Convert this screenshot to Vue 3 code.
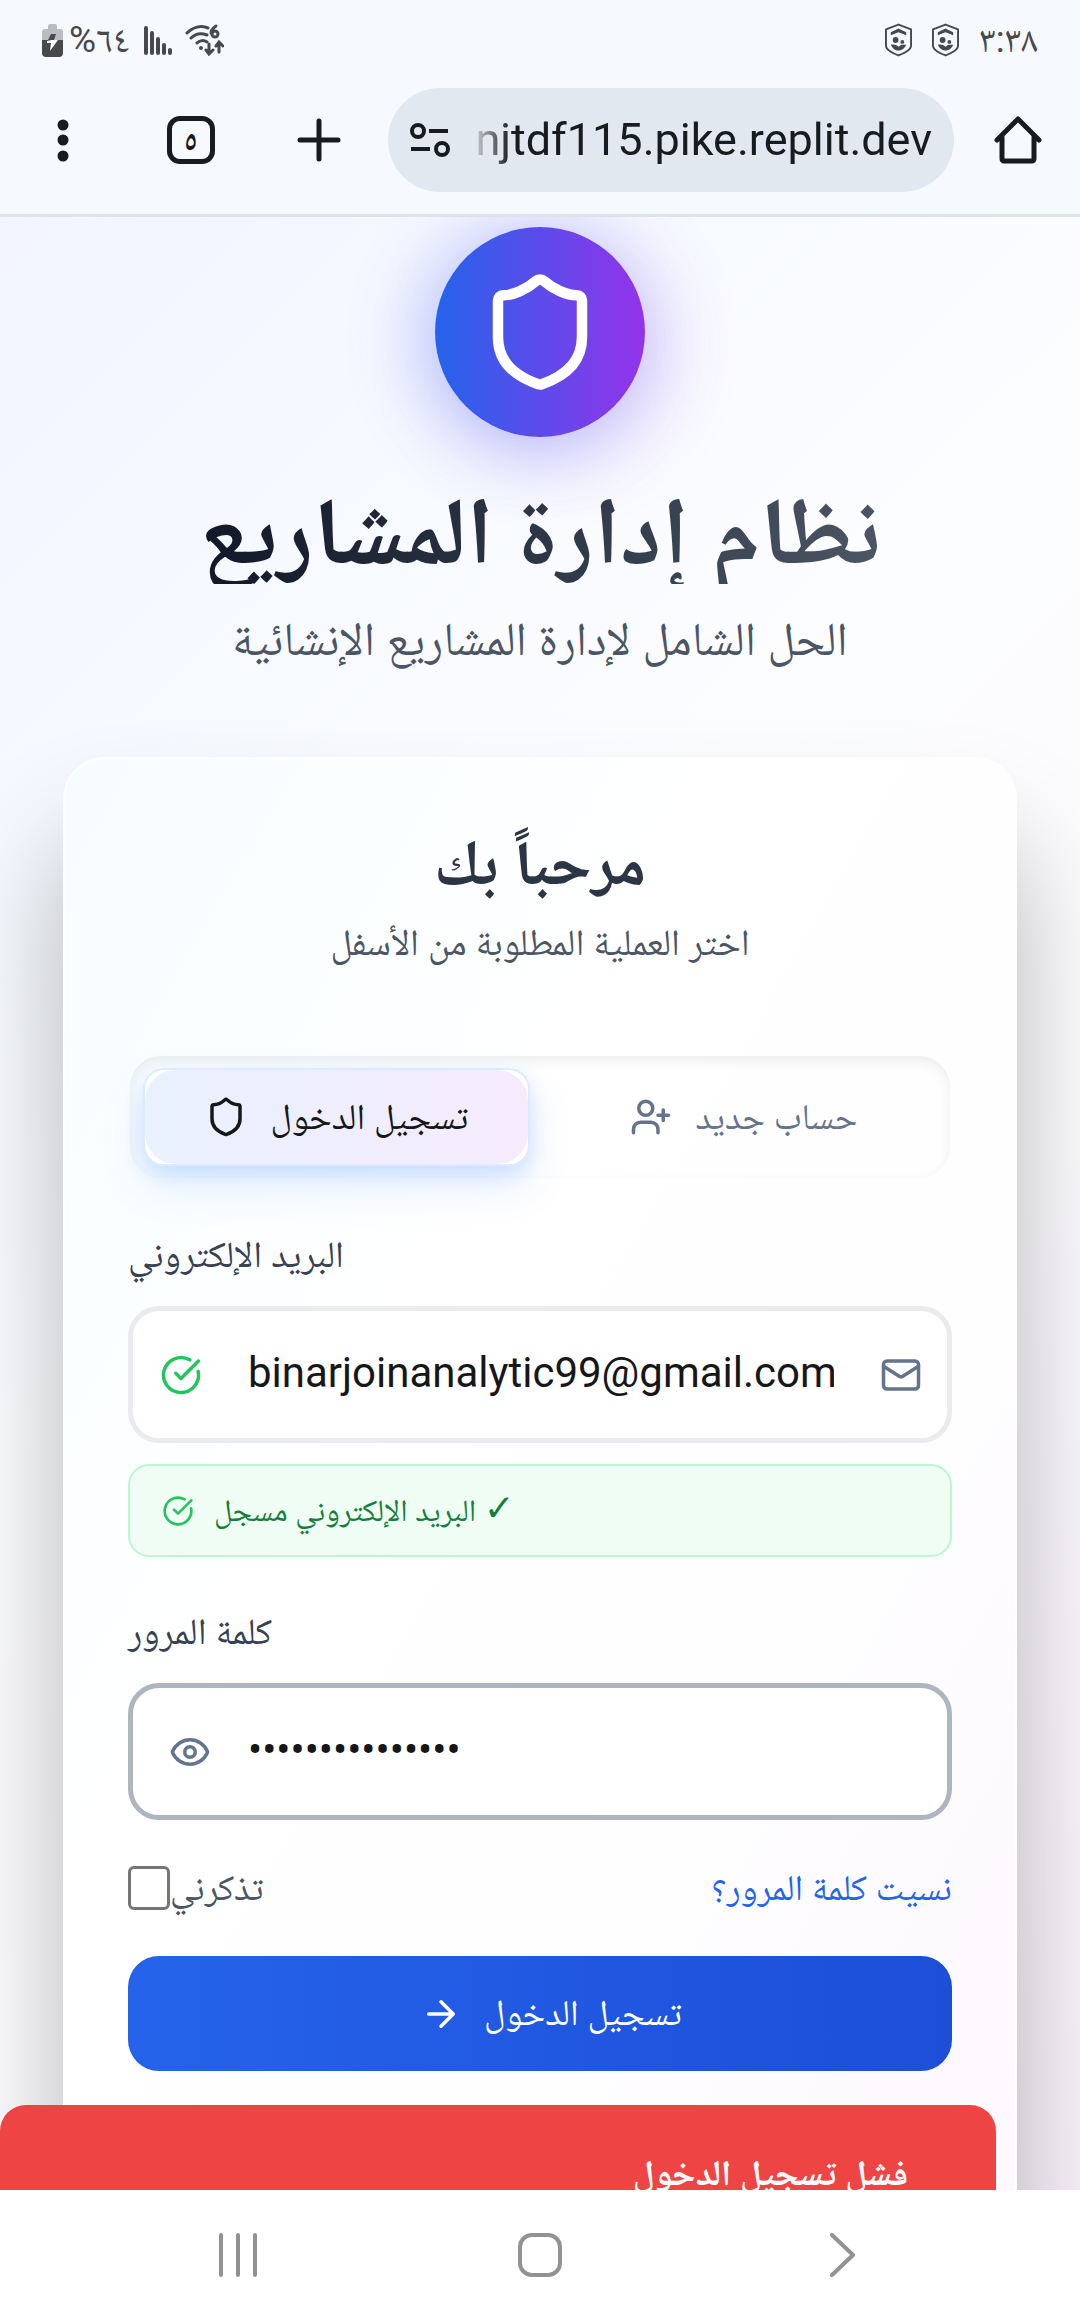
<script setup>
import { ref } from 'vue'

const email = ref('binarjoinanalytic99@gmail.com')
const password = ref('mypassword12345')
const remember = ref(false)
const signalBars = [29, 24, 18, 12, 7]
</script>

<template>
  <div class="screen">
    <header class="chrome">
      <div class="status">
        <div class="status-group">
          <svg class="battery" viewBox="0 0 21 33" aria-hidden="true">
            <path d="M6 2a2 2 0 0 1 2-2h5a2 2 0 0 1 2 2v3h3a3 3 0 0 1 3 3v8H0V8a3 3 0 0 1 3-3h3z" fill="#b9bcc1" />
            <path d="M0 16h21v13a4 4 0 0 1-4 4H4a4 4 0 0 1-4-4z" fill="#48494b" />
            <path d="M9 10h5l-2 6H6z" fill="#48494b" />
            <path d="M5 17l5-1h6L8 27l1-8H5z" fill="#fff" />
          </svg>
          <span class="percent">%٦٤</span>
          <svg class="signal" viewBox="0 0 28 30" aria-hidden="true">
            <rect v-for="(h, i) in signalBars" :key="i" :x="i * 6" :y="30 - h" width="4" :height="h" rx="2" fill="#48494b" />
          </svg>
          <svg class="wifi" viewBox="0 0 39 32" fill="none" stroke="#48494b" stroke-width="3" stroke-linecap="round" aria-hidden="true">
            <path d="M2 9C8 3 16 1 23 4M6 14c5-5 11-5 16-3M12 19c3-3 7-3 10-1" />
            <circle cx="16" cy="24" r="2" fill="#48494b" stroke="none" />
            <path d="M31 2c-3 2-5 4-5 7" />
            <circle cx="30" cy="10" r="3" />
            <path d="M24 20v9M21 26l3 4 4-4M34 28v-9M31 22l3-4 4 4" />
          </svg>
        </div>
        <div class="status-group shields">
          <svg v-for="n in 2" :key="n" class="guard" viewBox="0 0 28 34" aria-hidden="true">
            <path d="M14 1 27 6v17c0 4-7 8-13 10C8 31 1 27 1 23V6z" fill="none" stroke="#48494b" stroke-width="2" stroke-linejoin="round" />
            <path d="M6 9l8-4 8 4v3l-8-3-8 3z" fill="#48494b" />
            <circle cx="11" cy="17" r="3" fill="#48494b" />
            <circle cx="18" cy="19" r="2" fill="#48494b" />
            <path d="M6 22c3-1 6 0 8 2l3-2h5c-1 3-4 6-8 6s-6-2-8-6z" fill="#48494b" />
          </svg>
          <span class="clock">٣:٣٨</span>
        </div>
      </div>
      <div class="toolbar">
        <button class="tool" aria-label="القائمة">
          <svg viewBox="0 0 48 48" fill="#181c1f"><circle cx="24" cy="9" r="5.500" /><circle cx="24" cy="24" r="5.500" /><circle cx="24" cy="40" r="5.500" /></svg>
        </button>
        <button class="tool" aria-label="علامات التبويب"><span class="tab-count">٥</span></button>
        <button class="tool" aria-label="علامة تبويب جديدة">
          <svg viewBox="0 0 48 48" fill="none" stroke="#181c1f" stroke-width="5" stroke-linecap="round"><path d="M24 5v38M5 24h38" /></svg>
        </button>
        <div class="url">
          <svg viewBox="0 0 40 34" fill="none" stroke="#181c1f" stroke-width="4" aria-hidden="true">
            <circle cx="8" cy="8" r="6" /><path d="M19 8h19M1 26h19" /><circle cx="32" cy="26" r="6" />
          </svg>
          <span class="address">njtdf115.pike.replit.dev</span>
        </div>
        <button class="tool home" aria-label="الصفحة الرئيسية">
          <svg viewBox="0 0 48 48" fill="none" stroke="#181c1f" stroke-width="5" stroke-linejoin="round" stroke-linecap="round"><path d="M3 24 24 3l21 21M8 21v22a2 2 0 0 0 2 2h28a2 2 0 0 0 2-2V21" /></svg>
        </button>
      </div>
    </header>

    <main class="page">
      <div class="logo">
        <svg viewBox="0 0 24 24" class="lucide"><path d="M20 13c0 5-3.500 7.500-7.660 8.950a1 1 0 0 1-.670-.010C7.500 20.500 4 18 4 13V6a1 1 0 0 1 1-1c2 0 4.500-1.200 6.240-2.720a1.170 1.170 0 0 1 1.520 0C14.510 3.810 17 5 19 5a1 1 0 0 1 1 1z" /></svg>
      </div>
      <h1 dir="rtl">نظام إدارة المشاريع</h1>
      <p class="tagline" dir="rtl">الحل الشامل لإدارة المشاريع الإنشائية</p>

      <section class="card">
        <h2 dir="rtl">مرحباً بك</h2>
        <p class="hint" dir="rtl">اختر العملية المطلوبة من الأسفل</p>

        <div class="tabs" role="tablist">
          <button class="tab active" role="tab" aria-selected="true">
            <svg viewBox="0 0 24 24" class="lucide"><path d="M20 13c0 5-3.500 7.500-7.660 8.950a1 1 0 0 1-.670-.010C7.500 20.500 4 18 4 13V6a1 1 0 0 1 1-1c2 0 4.500-1.200 6.240-2.720a1.170 1.170 0 0 1 1.520 0C14.510 3.810 17 5 19 5a1 1 0 0 1 1 1z" /></svg>
            <span>تسجيل الدخول</span>
          </button>
          <button class="tab" role="tab" aria-selected="false">
            <svg viewBox="0 0 24 24" class="lucide"><path d="M16 21v-2a4 4 0 0 0-4-4H6a4 4 0 0 0-4 4v2" /><circle cx="9" cy="7" r="4" /><path d="M19 8v6M22 11h-6" /></svg>
            <span>حساب جديد</span>
          </button>
        </div>

        <form @submit.prevent>
          <label class="label" for="email">البريد الإلكتروني</label>
          <div class="field">
            <svg viewBox="0 0 24 24" class="lucide ok"><path d="M21.801 10A10 10 0 1 1 17 3.335" /><path d="m9 11 3 3L22 4" /></svg>
            <input id="email" v-model="email" type="email" />
            <svg viewBox="0 0 24 24" class="lucide muted"><rect x="2" y="4" width="20" height="16" rx="2" /><path d="m22 7-8.970 5.700a1.940 1.940 0 0 1-2.060 0L2 7" /></svg>
          </div>
          <div class="notice">
            <svg viewBox="0 0 24 24" class="lucide ok"><path d="M21.801 10A10 10 0 1 1 17 3.335" /><path d="m9 11 3 3L22 4" /></svg>
            <span dir="rtl"><span class="tick">✓</span> البريد الإلكتروني مسجل</span>
          </div>

          <label class="label" for="password">كلمة المرور</label>
          <div class="field focus">
            <button type="button" class="peek" aria-label="إظهار كلمة المرور">
              <svg viewBox="0 0 24 24" class="lucide muted"><path d="M2.062 12.348a1 1 0 0 1 0-.696 10.750 10.750 0 0 1 19.876 0 1 1 0 0 1 0 .696 10.750 10.750 0 0 1-19.876 0" /><circle cx="12" cy="12" r="3" /></svg>
            </button>
            <input id="password" v-model="password" type="password" />
          </div>

          <div class="options">
            <label class="remember"><input v-model="remember" type="checkbox" /><span>تذكرني</span></label>
            <a href="#" dir="rtl">نسيت كلمة المرور؟</a>
          </div>

          <button class="submit" type="submit">
            <svg viewBox="0 0 24 24" class="lucide"><path d="M5 12h14M12 5l7 7-7 7" /></svg>
            <span>تسجيل الدخول</span>
          </button>
        </form>
      </section>

      <div class="toast" role="alert" dir="rtl">فشل تسجيل الدخول</div>
    </main>

    <nav class="system">
      <button aria-label="التطبيقات الأخيرة"><svg viewBox="0 0 44 44"><path d="M5 2v40M22 2v40M39 2v40" /></svg></button>
      <button aria-label="الشاشة الرئيسية"><svg viewBox="0 0 44 44"><rect x="2" y="2" width="40" height="40" rx="12" /></svg></button>
      <button aria-label="رجوع"><svg viewBox="0 0 44 44"><path d="M12 2l21 20-21 20" /></svg></button>
    </nav>
  </div>
</template>

<style>
body {
  margin: 0;
}
</style>

<style scoped>
* {
  box-sizing: border-box;
}
.screen {
  display: flex;
  flex-direction: column;
  height: 100vh;
  overflow: hidden;
  font-family: Roboto, "Noto Naskh Arabic", "Noto Sans Arabic", "DejaVu Sans", sans-serif;
  color: #161719;
}
button,
input {
  font: inherit;
  color: inherit;
  border: 0;
  padding: 0;
  background: none;
}
h1,
h2,
p {
  margin: 0;
}
svg {
  display: block;
  flex: none;
}
.lucide {
  width: 42px;
  height: 42px;
  fill: none;
  stroke: currentColor;
  stroke-width: 2;
  stroke-linecap: round;
  stroke-linejoin: round;
}
.ok {
  color: #22c55e;
}
.muted {
  color: #64748b;
}

.chrome {
  flex: none;
  background: #f6faff;
  border-bottom: 3px solid #dde3e9;
}
.status {
  display: flex;
  justify-content: space-between;
  align-items: center;
  height: 80px;
  padding: 0 42px;
  color: #48494b;
  font-size: 37px;
  line-height: 40px;
}
.status-group {
  display: flex;
  align-items: center;
}
.battery {
  width: 21px;
  height: 33px;
}
.percent {
  margin: 0 15px 0 6px;
}
.signal {
  width: 28px;
  height: 30px;
  margin-right: 13px;
}
.wifi {
  width: 39px;
  height: 32px;
}
.shields {
  gap: 20px;
}
.guard {
  width: 27px;
  height: 34px;
}
.toolbar {
  display: flex;
  align-items: center;
  padding: 8px 38px 22px 39px;
}
.tool {
  flex: none;
  display: grid;
  place-items: center;
  width: 48px;
  height: 48px;
  margin-right: 80px;
}
.tool svg {
  width: 48px;
  height: 48px;
}
.tool:nth-child(3) {
  margin-right: 45px;
}
.tool.home {
  margin: 0 0 0 40px;
}
.tab-count {
  display: grid;
  place-items: center;
  width: 48px;
  height: 48px;
  border: 5px solid #181c1f;
  border-radius: 13px;
  font-size: 31px;
  line-height: 31px;
  font-weight: 700;
}
.url {
  flex: 1;
  min-width: 0;
  display: flex;
  align-items: center;
  gap: 20px;
  height: 104px;
  padding: 0 22px;
  border-radius: 52px;
  background: #e1e8f0;
}
.url svg {
  width: 40px;
  height: 34px;
}
.address {
  flex: 1;
  min-width: 0;
  text-align: right;
  font-size: 45px;
  line-height: 60px;
  white-space: nowrap;
  color: #181c1f;
  mask-image: linear-gradient(90deg, transparent, #000 40px);
}

.page {
  position: relative;
  flex: 1;
  min-height: 0;
  overflow: hidden;
  padding: 10px 63px 0;
  background: linear-gradient(135deg, #f0f5ff, #fcfdff 40%, #fdfcff 65%, #f9f2fb);
  text-align: center;
}
.logo {
  display: grid;
  place-items: center;
  width: 210px;
  height: 210px;
  margin: 0 auto;
  border-radius: 50%;
  background: linear-gradient(90deg, #2563eb, #9333ea);
  box-shadow: -14px 8px 74px rgba(37, 99, 235, 0.25), 14px 14px 84px rgba(147, 51, 234, 0.24);
  color: #fff;
}
.logo svg {
  width: 126px;
  height: 126px;
}
h1 {
  width: fit-content;
  margin: 42px auto 21px;
  font-size: 95px;
  line-height: 105px;
  font-weight: 700;
  background: linear-gradient(90deg, #111827, #4b5563);
  background-clip: text;
  color: transparent;
}
.tagline {
  margin-bottom: 84px;
  font-size: 47px;
  line-height: 68px;
  color: #4b5563;
}

.card {
  padding: 63px;
  padding-bottom: 420px;
  border: 2px solid #fdfeff;
  border-radius: 42px;
  background: linear-gradient(120deg, #f7fdff, #ffffff 35%, #fefdff 65%, #fdf7fe);
  box-shadow: 0 84px 120px -4px rgba(0, 0, 0, 0.3);
}
h2 {
  font-size: 63px;
  line-height: 84px;
  font-weight: 700;
  color: #2b3544;
}
.hint {
  margin: 10px 0 87px;
  font-size: 37px;
  line-height: 53px;
  color: #4b5563;
}
.tabs {
  display: grid;
  grid-template-columns: 1fr 1fr;
  gap: 20px;
  padding: 12px 13px;
  margin: 0 2px 53px;
  border-radius: 31px;
  box-shadow: inset 0 5px 12px rgba(0, 0, 0, 0.07);
}
.tab {
  position: relative;
  display: flex;
  align-items: center;
  justify-content: center;
  gap: 24px;
  height: 98px;
  border-radius: 21px;
  font-size: 36px;
  line-height: 53px;
  color: #64748b;
}
.tab.active {
  isolation: isolate;
  border: 2px solid #deebfd;
  background: #fff;
  box-shadow: 0 20px 44px rgba(59, 130, 246, 0.14), 0 8px 18px rgba(59, 130, 246, 0.16);
  color: #161719;
}
.tab.active::before {
  content: "";
  position: absolute;
  inset: 0;
  z-index: -1;
  border-radius: 31px;
  background: linear-gradient(90deg, #e9f1fe, #f5ebfd);
}
.label {
  display: block;
  margin-bottom: 27px;
  text-align: left;
  font-size: 37px;
  line-height: 48px;
  color: #374151;
}
.field {
  display: flex;
  align-items: center;
  gap: 46px;
  height: 137px;
  padding: 0 25px 0 27px;
  border: 5px solid #e9ebef;
  border-radius: 31px;
  background: #fff;
}
.field input {
  flex: 1;
  min-width: 0;
  height: 80px;
  padding-bottom: 4px;
  font-size: 42px;
  outline: 0;
}
.field.focus {
  gap: 37px;
  padding-left: 36px;
  border-color: #afb5bf;
}
.notice {
  display: flex;
  align-items: center;
  gap: 20px;
  height: 93px;
  margin: 21px 0 51px;
  padding: 0 32px;
  border: 2px solid #bbf7d0;
  border-radius: 21px;
  background: #f0fdf4;
  font-size: 31px;
  line-height: 42px;
  color: #15803d;
}
.notice svg {
  width: 32px;
  height: 32px;
}
.tick {
  font-size: 37px;
  line-height: 31px;
  font-weight: 700;
}
.options {
  display: flex;
  justify-content: space-between;
  align-items: center;
  margin: 46px 0;
  font-size: 36px;
  line-height: 44px;
}
.remember {
  display: flex;
  align-items: center;
  color: #4b5563;
}
.remember input {
  appearance: none;
  width: 42px;
  height: 44px;
  margin: 0;
  border: 3px solid #767676;
  border-radius: 6px;
  background: #fff;
}
.options a {
  color: #2563eb;
  text-decoration: none;
}
.submit {
  display: flex;
  align-items: center;
  justify-content: center;
  gap: 22px;
  width: 100%;
  height: 115px;
  padding-left: 22px;
  border-radius: 31px;
  background: linear-gradient(90deg, #2563eb, #1d4ed8);
  color: #fff;
  font-size: 36px;
  line-height: 53px;
}

.toast {
  position: absolute;
  left: 0;
  right: 84px;
  bottom: -85px;
  height: 170px;
  padding: 42px 88px;
  border-radius: 26px;
  background: #ef4444;
  color: #fafafa;
  text-align: right;
  font-size: 36px;
  line-height: 53px;
  font-weight: 700;
}

.system {
  flex: none;
  display: flex;
  justify-content: center;
  align-items: center;
  gap: 258px;
  height: 126px;
  padding-top: 4px;
  background: #fff;
}
.system svg {
  width: 44px;
  height: 44px;
  fill: none;
  stroke: #929292;
  stroke-width: 4;
  stroke-linecap: round;
  stroke-linejoin: round;
}
</style>
